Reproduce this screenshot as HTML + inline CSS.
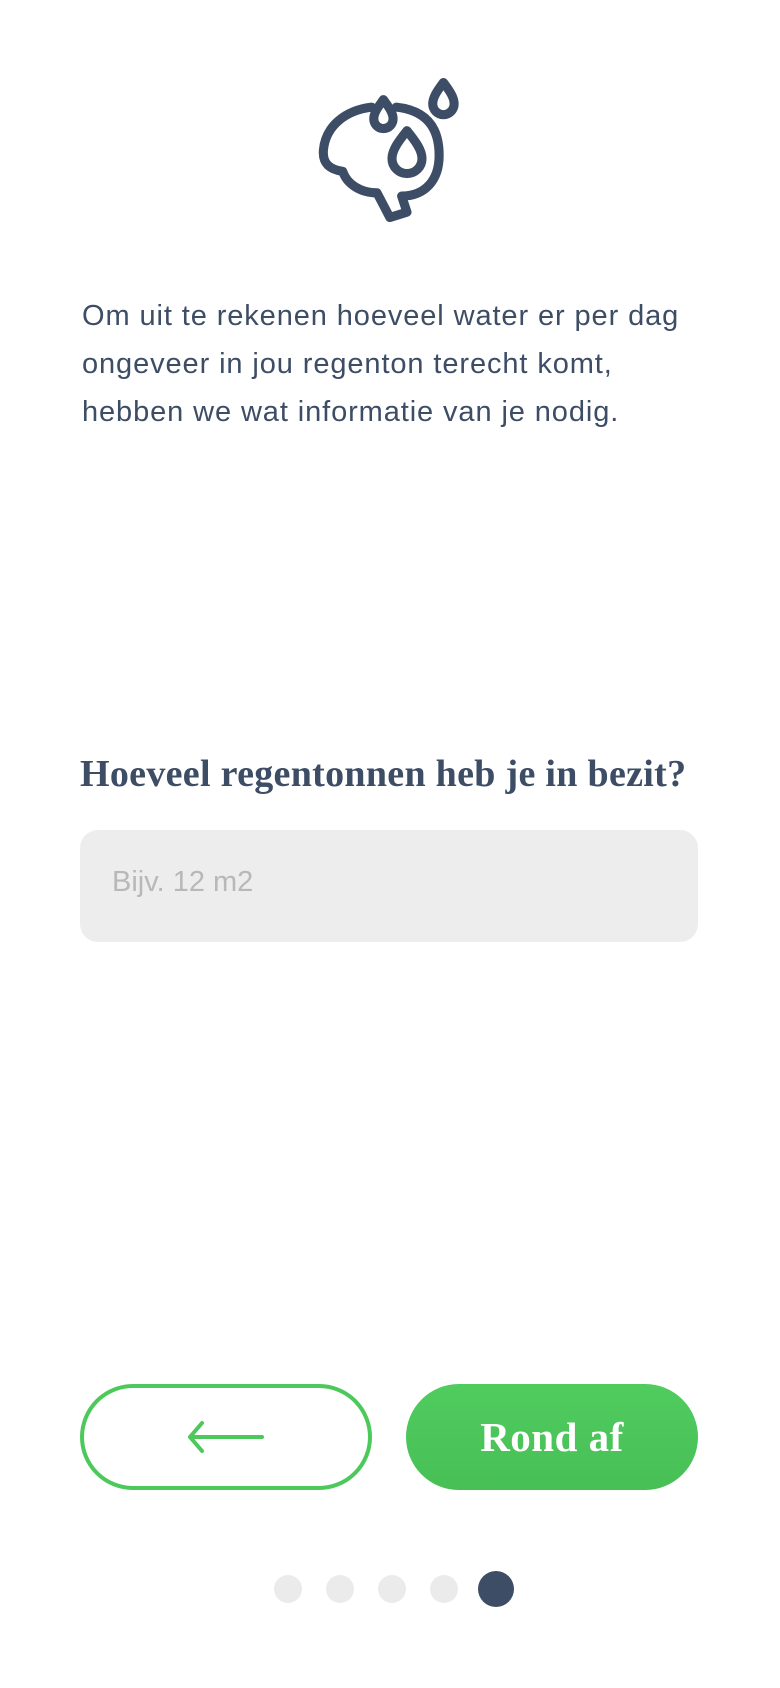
<!DOCTYPE html>
<html><head><meta charset="utf-8"><style>
html,body{margin:0;padding:0;background:#fff;width:780px;height:1688px;overflow:hidden;position:relative;font-family:"Liberation Sans",sans-serif;color:#3d4d66}
.p{position:absolute;left:82px;top:292px;width:700px;font-size:29px;line-height:48px;color:#3d4d66;letter-spacing:0.9px;white-space:nowrap}
h2{position:absolute;left:80px;top:752px;margin:0;font-family:"Liberation Serif",serif;font-weight:bold;font-size:38px;color:#3d4d66;letter-spacing:0.3px}
.inp{position:absolute;left:80px;top:830px;width:618px;height:112px;background:#ededed;border-radius:18px}
.inp span{position:absolute;left:32px;top:36px;font-size:29px;color:#b8b8b8}
.b1{position:absolute;left:80px;top:1384px;width:292px;height:106px;box-sizing:border-box;border:4px solid #4cc95a;border-radius:53px}
.b2{position:absolute;left:406px;top:1384px;width:292px;height:106px;border-radius:53px;background:linear-gradient(#50cc5f,#47bf55);color:#fff;font-family:"Liberation Serif",serif;font-weight:bold;font-size:41px;text-align:center;line-height:106px;letter-spacing:0.5px}
.d{position:absolute;top:1575px;width:28px;height:28px;border-radius:50%;background:#ebebeb}
</style></head><body>
<svg style="position:absolute;left:2px;top:0" width="780" height="300" viewBox="0 0 728 280" fill="none" stroke="#3d4d66" stroke-width="8.5" stroke-linejoin="round" stroke-linecap="round">
<path d="M345 100 C320 103 302 118 300 140 C299 152 305 158 318 160 C322 172 335 180 350 180 L362 203 L378 198 L373 183 C395 183 408 168 408 145 C408 118 395 103 368 100"/>
<path d="M356 93 C351 100 347 105 347 111 A9 9 0 0 0 365 111 C365 105 361 100 356 93Z"/>
<path d="M378 122 C370 132 364 140 364 148 A14 14 0 0 0 392 148 C392 140 386 132 378 122Z"/>
<path d="M412 77 C406 85 402 91 402 97 A10 10 0 0 0 422 97 C422 91 418 85 412 77Z"/>
</svg>
<div class="p">Om uit te rekenen hoeveel water er per dag<br>ongeveer in jou regenton terecht komt,<br>hebben we wat informatie van je nodig.</div>
<h2>Hoeveel regentonnen heb je in bezit?</h2>
<div class="inp"><span>Bijv. 12 m2</span></div>
<div class="b1"><svg style="position:absolute;left:100px;top:30px" width="84" height="38" viewBox="0 0 84 38" fill="none" stroke="#4cc95a" stroke-width="4" stroke-linecap="round" stroke-linejoin="round"><path d="M6 19 H78 M18 5 L6 19 L18 33"/></svg></div>
<div class="b2">Rond af</div>
<div class="d" style="left:274px"></div>
<div class="d" style="left:326px"></div>
<div class="d" style="left:378px"></div>
<div class="d" style="left:430px"></div>
<div class="d" style="left:478px;top:1571px;width:36px;height:36px;background:#3d4d66"></div>
</body></html>
